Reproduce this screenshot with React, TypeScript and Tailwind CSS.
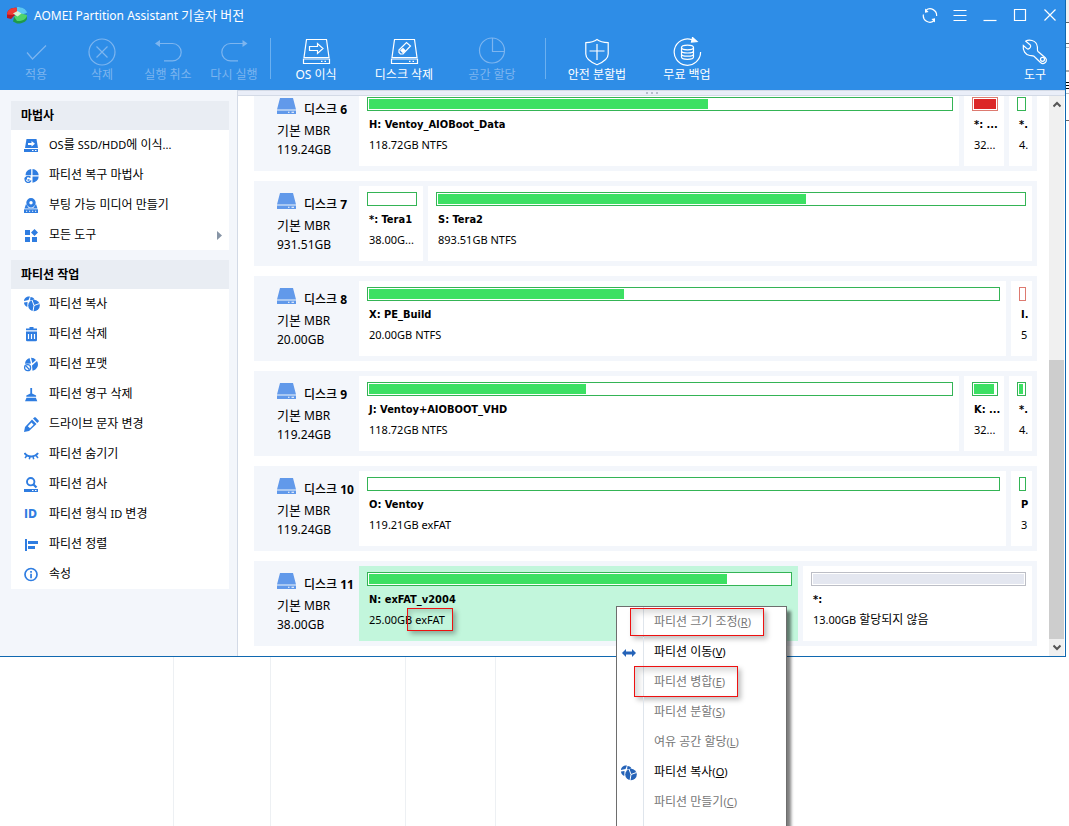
import type { ReactNode } from "react";

const BLUE = "#2f7de1";

/* ---------- toolbar icons ---------- */

function Line({ children }: { children: ReactNode }) {
  return (
    <svg width="30" height="30" viewBox="0 0 30 30" fill="none" stroke="currentColor" strokeWidth="1.2">
      {children}
    </svg>
  );
}

const ApplyIcon = () => (
  <Line>
    <path d="M6 15.500l5.500 6.500L25 8.500" />
  </Line>
);
const DiscardIcon = () => (
  <Line>
    <circle cx="15" cy="15" r="13" />
    <path d="M9.500 9.500l11 11M20.500 9.500l-11 11" />
  </Line>
);
const UndoIcon = () => (
  <Line>
    <path d="M6 6.500h13.500a8.700 8.700 0 0 1 0 17.400H11" />
    <path d="M2 6.500l5-3.500v7z" fill="currentColor" stroke="none" />
  </Line>
);
const RedoIcon = () => (
  <Line>
    <path d="M24 6.500H11.500a8.700 8.700 0 0 0 0 17.400H19" />
    <path d="M28.500 6.500l-5-3.500v7z" fill="currentColor" stroke="none" />
  </Line>
);
const OsIcon = () => (
  <Line>
    <path d="M5.500 2.500h20l2.500 18H3zM2.500 22h26v4.500h-26z" />
    <path d="M20 24.300h1.500M23.500 24.300H25" />
    <path d="M8.500 9.500h8V6.500l5.500 5-5.500 5v-3h-8z" />
  </Line>
);
const WipeIcon = () => (
  <Line>
    <path d="M5.500 2.500h20l2.500 18H3zM2.500 22h26v4.500h-26z" />
    <path d="M20 24.300h1.500M23.500 24.300H25" />
    <path d="M10 13l7.500-7.500 4 3.500-7.500 8h-2.500L10 15.500z" />
    <path d="M12 13.500l2-2 2 2-2 2z" fill="currentColor" />
  </Line>
);
const AllocateIcon = () => (
  <Line>
    <circle cx="15" cy="13.500" r="12.500" />
    <path d="M15.500 1v13.500H28" />
  </Line>
);
const ShieldIcon = () => (
  <Line>
    <path d="M15 2.500c3 2.300 7 3 11.200 3.200V17c0 5-6 8.600-11.200 10.700C9.800 25.600 3.800 22 3.800 17V5.700C8 5.500 12 4.800 15 2.500z" />
    <path d="M15 7v16M7.500 14h15" />
  </Line>
);
const BackupIcon = () => (
  <Line>
    <path d="M20 2.700A13.200 13.200 0 1 0 28.600 15" />
    <path d="M20.500 .5l4.500 4-5.500 .5z" fill="currentColor" />
    <ellipse cx="15.500" cy="10.500" rx="6" ry="2.300" />
    <path d="M9.500 10.500v9.500c0 1.300 2.700 2.300 6 2.300s6-1 6-2.300v-9.500M9.500 13.700c0 1.300 2.700 2.300 6 2.300s6-1 6-2.300M9.500 16.900c0 1.300 2.700 2.300 6 2.300s6-1 6-2.300" />
  </Line>
);
const WrenchIcon = () => (
  <Line>
    <path d="M12 3.500c-3.700-1-6 .3-6.300.7l4.600 3.800c.8 1 .2 2.500-.7 3.200-1 .8-2.300 1-3 .2L3.300 8.500c-.7 5 2 9.500 6.500 10 2 .2 3.200 0 4.200.8l6.500 6.200c2.300 2 5 .8 5.700-1.200.5-1.600 0-2.800-.9-3.600L18 14.500c-1-.9-.4-2.500-.6-4.500-.3-3-2.300-5.700-5.400-6.500z" />
    <circle cx="22.500" cy="22.300" r="2" />
  </Line>
);

/* ---------- sidebar icons ---------- */

function Glyph({ children }: { children: ReactNode }) {
  return (
    <svg width="15" height="15" viewBox="0 0 15 15" fill={BLUE} className="shrink-0">
      {children}
    </svg>
  );
}

const MigrateGlyph = () => (
  <Glyph>
    <path d="M2.500 1h10l1.500 9H1z" />
    <path d="M0 11h14v3H0z" />
    <path d="M4 5h3.500V3L11 5.800 7.500 8.500V7H4zM8 12h1.500v1H8zM11 12h1.500v1H11z" fill="#fff" />
  </Glyph>
);
const RecoverGlyph = () => (
  <Glyph>
    <path d="M7.200 1v6.200H1.500A6.500 6.500 0 0 1 7.200 1zM8.500 1a6.500 6.500 0 0 1 6.200 6.200H8.500zM8.500 8.500h6.200a6.500 6.500 0 0 1-6.200 6.200z" />
    <path d="M6.500 9.500A3 3 0 1 0 7 12.500" fill="none" stroke={BLUE} strokeWidth="1.400" />
    <path d="M0 10l3-1v3zM3.500 11.200h2v1.500h-2z" />
  </Glyph>
);
const MediaGlyph = () => (
  <Glyph>
    <path fillRule="evenodd" d="M7 0a4.700 4.700 0 1 1 0 9.400A4.700 4.700 0 0 1 7 0zm0 3a1.700 1.700 0 1 0 0 3.400A1.700 1.700 0 0 0 7 3z" />
    <path d="M2 6l2.500 3.700h5L12 6l1.500 4.500H.5z" />
    <path d="M0 11.300h14V15H0z" />
    <path d="M2 12.700h1.200v1.100H2zM5 12.700h1.200v1.100H5zM8 12.700h1.200v1.100H8zM11 12.700h1.200v1.100H11z" fill="#fff" />
  </Glyph>
);
const ToolsGlyph = () => (
  <Glyph>
    <path d="M1 2h5v5H1zM1 9h5v5H1zM8 9h5v5H8zM10.500 1L14 4.500 10.500 8 7 4.500z" />
  </Glyph>
);
const CopyGlyph = ({ color = BLUE }: { color?: string }) => (
  <svg width="16" height="16" viewBox="0 0 16 16" fill={color} className="-mr-px shrink-0">
    <path d="M0 5c0-3 3-5 6-4.500L4.500 4zM6.500 1c2 0 3.500 1 4 2.500L6 4.500zM0 6.500L3.500 6l-.2 5C1.500 10 0 8.500 0 6.500z" />
    <circle cx="10" cy="9.500" r="5.800" />
    <path d="M10 9.500L8 4M10 9.500l5.500-2M10 9.500l-1 6" fill="none" stroke="#fff" strokeWidth="1" />
  </svg>
);
const TrashGlyph = () => (
  <Glyph>
    <path d="M5.500 0h4v1.500H13v1.700H2V1.500h3.500z" />
    <path d="M2 4.500h11V13a1.300 1.300 0 0 1-1.300 1.300H3.300A1.300 1.300 0 0 1 2 13z" />
    <path d="M4.500 7v5M7.500 7v5M10.500 7v5" stroke="#fff" strokeWidth="1.200" />
  </Glyph>
);
const FormatGlyph = () => (
  <Glyph>
    <path d="M1 6.800A6.600 6.600 0 0 1 5.500 1L7 6.500zM7 .8A6.600 6.600 0 0 1 12 3L8.300 6.300zM13 4a6.500 6.500 0 0 1-4.500 9.800L8 8.500z" />
    <circle cx="3.600" cy="10.700" r="3" fill="#fff" stroke={BLUE} strokeWidth="1.300" />
    <path d="M2 9l3.300 3.500" stroke={BLUE} strokeWidth="1.200" />
  </Glyph>
);
const BroomGlyph = () => (
  <Glyph>
    <path d="M6.300 1h1.800v5.500l4 2v1.300H2.300V8.500l4-2zM2.500 10.800h9.400l1.400 3.400H1z" />
  </Glyph>
);
const PencilGlyph = () => (
  <Glyph>
    <path fillRule="evenodd" d="M8 2.500L12.500 7 5 14l-5 1 1-5zM7.500 5.500L3.800 9.200 6 11.300 9.600 7.700z" />
    <path d="M9 1.500L10.500.3h1L14.700 3.500v1L13.300 6z" />
  </Glyph>
);
const HideGlyph = () => (
  <Glyph>
    <path d="M.5 6c3 4.500 10.500 4.500 13.500 0" fill="none" stroke={BLUE} strokeWidth="2" />
    <path d="M3 8.500L1 11M12 8.500l2 2.500M6 9.500l-.7 2.700M9 9.500l.7 2.700" stroke={BLUE} strokeWidth="1.500" />
  </Glyph>
);
const CheckGlyph = () => (
  <Glyph>
    <circle cx="6.700" cy="4.700" r="3.700" fill="none" stroke={BLUE} strokeWidth="1.900" />
    <path d="M9 7l3.500 3.500" stroke={BLUE} strokeWidth="2.300" />
    <path d="M0 12h14v3H0z" />
    <path d="M8 13h1.500v1H8zM11 13h1.500v1H11z" fill="#fff" />
  </Glyph>
);
const AlignGlyph = () => (
  <Glyph>
    <path d="M1 2h2v12H1zM4 4h10v3H4zM4 9h7v3H4z" />
  </Glyph>
);
const InfoGlyph = () => (
  <Glyph>
    <circle cx="7" cy="7.500" r="6" fill="none" stroke={BLUE} strokeWidth="1.700" />
    <path d="M6.200 4h1.700v1.700H6.200zM6.200 6.700h1.700v4.500H6.200z" />
  </Glyph>
);
const IdGlyph = () => (
  <span aria-hidden className="w-[15px] shrink-0 font-['DejaVu_Sans_Condensed','DejaVu_Sans',sans-serif] text-[12px] font-bold leading-4 text-[#2f7de1]">
    ID
  </span>
);

/* ---------- pieces ---------- */

type Tool = { label: string; icon: ReactNode; disabled?: boolean };

function ToolButton({ label, icon, disabled, width }: Tool & { width: string }) {
  return (
    <button
      disabled={disabled}
      className={`flex flex-col items-center text-white disabled:text-[#7db5ef] ${width}`}
    >
      <span className="mt-[7px]">{icon}</span>
      <span className="text-[12px] leading-4">{label}</span>
    </button>
  );
}

const historyTools: Tool[] = [
  { label: "적용", icon: <ApplyIcon />, disabled: true },
  { label: "삭제", icon: <DiscardIcon />, disabled: true },
  { label: "실행 취소", icon: <UndoIcon />, disabled: true },
  { label: "다시 실행", icon: <RedoIcon />, disabled: true },
];
const diskTools: Tool[] = [
  { label: "OS 이식", icon: <OsIcon /> },
  { label: "디스크 삭제", icon: <WipeIcon /> },
  { label: "공간 할당", icon: <AllocateIcon />, disabled: true },
];
const extraTools: Tool[] = [
  { label: "안전 분할법", icon: <ShieldIcon /> },
  { label: "무료 백업", icon: <BackupIcon /> },
];

const Small = ({ children }: { children: ReactNode }) => <span className="text-[11px]">{children}</span>;

type SideItem = { key: string; label: ReactNode; icon: ReactNode; more?: boolean };

const wizardItems: SideItem[] = [
  {
    key: "migrate",
    label: (
      <>
        <Small>OS</Small>를 <Small>SSD/HDD</Small>에 이식<Small>...</Small>
      </>
    ),
    icon: <MigrateGlyph />,
  },
  { key: "recover", label: "파티션 복구 마법사", icon: <RecoverGlyph /> },
  { key: "media", label: "부팅 가능 미디어 만들기", icon: <MediaGlyph /> },
  { key: "tools", label: "모든 도구", icon: <ToolsGlyph />, more: true },
];
const partitionItems: SideItem[] = [
  { key: "copy", label: "파티션 복사", icon: <CopyGlyph /> },
  { key: "delete", label: "파티션 삭제", icon: <TrashGlyph /> },
  { key: "format", label: "파티션 포맷", icon: <FormatGlyph /> },
  { key: "wipe", label: "파티션 영구 삭제", icon: <BroomGlyph /> },
  { key: "letter", label: "드라이브 문자 변경", icon: <PencilGlyph /> },
  { key: "hide", label: "파티션 숨기기", icon: <HideGlyph /> },
  { key: "check", label: "파티션 검사", icon: <CheckGlyph /> },
  {
    key: "type",
    label: (
      <>
        파티션 형식 <Small>ID</Small> 변경
      </>
    ),
    icon: <IdGlyph />,
  },
  { key: "align", label: "파티션 정렬", icon: <AlignGlyph /> },
  { key: "props", label: "속성", icon: <InfoGlyph /> },
];

function SideCard({ title, items }: { title: string; items: SideItem[] }) {
  return (
    <section className="bg-white">
      <h2 className="bg-[#e9edf3] px-[10px] text-[12px] font-bold leading-[29px]">{title}</h2>
      <ul>
        {items.map((item) => (
          <li key={item.key}>
            <button className="flex h-[30px] w-full items-center gap-[10px] pl-[13px] pr-[7px] text-left text-[12px] leading-4">
              {item.icon}
              <span className="flex-1 whitespace-nowrap">{item.label}</span>
              {item.more && (
                <svg width="5" height="9" viewBox="0 0 5 9" fill="#8795a6">
                  <path d="M0 0l5 4.500L0 9z" />
                </svg>
              )}
            </button>
          </li>
        ))}
      </ul>
    </section>
  );
}

type Part = {
  name: string;
  size: ReactNode;
  used: number;
  width?: string;
  tone?: "green" | "red" | "rose" | "gray";
  selected?: boolean;
};
type Disk = { id: number; size: string; parts: Part[] };

const disks: Disk[] = [
  {
    id: 6,
    size: "119.24GB",
    parts: [
      { name: "H: Ventoy_AIOBoot_Data", size: "118.72GB NTFS", used: 58.2 },
      { name: "*: ...", size: "32...", used: 100, width: "w-10", tone: "red" },
      { name: "*.", size: "4.", used: 0, width: "w-[23px]" },
    ],
  },
  {
    id: 7,
    size: "931.51GB",
    parts: [
      { name: "*: Tera1", size: "38.00G...", used: 0, width: "w-16" },
      { name: "S: Tera2", size: "893.51GB NTFS", used: 62.8 },
    ],
  },
  {
    id: 8,
    size: "20.00GB",
    parts: [
      { name: "X: PE_Build", size: "20.00GB NTFS", used: 40.5 },
      { name: "I.", size: "5", used: 0, width: "w-[21px]", tone: "rose" },
    ],
  },
  {
    id: 9,
    size: "119.24GB",
    parts: [
      { name: "J: Ventoy+AIOBOOT_VHD", size: "118.72GB NTFS", used: 37.3 },
      { name: "K: ...", size: "32...", used: 91, width: "w-10" },
      { name: "*.", size: "4.", used: 80, width: "w-[23px]" },
    ],
  },
  {
    id: 10,
    size: "119.24GB",
    parts: [
      { name: "O: Ventoy", size: "119.21GB exFAT", used: 0 },
      { name: "P", size: "3", used: 0, width: "w-[21px]" },
    ],
  },
  {
    id: 11,
    size: "38.00GB",
    parts: [
      {
        name: "N: exFAT_v2004",
        size: (
          <>
            25.00GB{" "}
            <span className="relative">
              exFAT
              <span className="absolute -inset-x-2 -inset-y-1 border border-[#ee1111] shadow-[3px_3px_5px_rgba(0,0,0,0.3),inset_3px_3px_5px_rgba(0,0,0,0.15)]" />
            </span>
          </>
        ),
        used: 85,
        selected: true,
      },
      {
        name: "*:",
        size: (
          <>
            13.00GB <span className="text-[12px]">할당되지 않음</span>
          </>
        ),
        used: 100,
        width: "w-[229px]",
        tone: "gray",
      },
    ],
  },
];

const tones = {
  green: { border: "border-[#34b455]", fill: "bg-[#3ce063]" },
  red: { border: "border-[#dd7a70]", fill: "bg-[#dc2626]" },
  rose: { border: "border-[#dd7a70]", fill: "bg-[#dc2626]" },
  gray: { border: "border-[#bcbec6]", fill: "bg-[#e4e7f0]" },
};

function PartitionPanel({ part }: { part: Part }) {
  const tone = tones[part.tone ?? "green"];
  return (
    <div
      className={`overflow-hidden pl-2 pr-[6px] pt-[6px] ${part.width ? `${part.width} shrink-0` : "min-w-0 flex-1"} ${
        part.selected ? "bg-[#c2f6dc]" : "bg-white"
      }`}
    >
      <div className={`h-[14px] border bg-white p-px ${tone.border}`}>
        <div className={`h-full ${tone.fill}`} style={{ width: `${part.used}%` }} />
      </div>
      <div className="mt-[6px] whitespace-nowrap pl-0.5 text-[11px] leading-4">
        <div className="font-['DejaVu_Sans_Condensed','Noto_Sans',sans-serif] font-bold">{part.name}</div>
        <div className="mt-1">{part.size}</div>
      </div>
    </div>
  );
}

function DiskRow({ disk }: { disk: Disk }) {
  return (
    <div className="flex h-[85px] gap-[5px] bg-[#f3f6fb] py-[5px] pr-[5px]">
      <div className="w-[100px] shrink-0 pl-[23px] pt-[6px] text-[12px] leading-[19px]">
        <div className="flex h-6 items-center gap-2">
          <svg width="19" height="17" viewBox="0 0 19 17" fill="#6199ea" className="mb-[6px] shrink-0">
            <path d="M3 0h13l3 11.500H0zM0 12.500h19V16H0z" />
            <path d="M11 13.700h1.500v1H11zM14.500 13.700H17v1h-2.500z" fill="#fff" />
          </svg>
          <span className="whitespace-nowrap font-medium">
            디스크 <b>{disk.id}</b>
          </span>
        </div>
        <div>
          <span className="text-[13px]">기본</span> MBR
        </div>
        <div>{disk.size}</div>
      </div>
      {disk.parts.map((part) => (
        <PartitionPanel key={part.name} part={part} />
      ))}
    </div>
  );
}

type MenuEntry = { label: string; hotkey: string; icon?: ReactNode; enabled?: boolean; mark?: string };

const menuEntries: MenuEntry[] = [
  { label: "파티션 크기 조정", hotkey: "R", mark: "left-[13px] right-[22px] top-px h-[28px]" },
  {
    label: "파티션 이동",
    hotkey: "V",
    enabled: true,
    icon: (
      <svg width="14" height="8" viewBox="0 0 14 8" fill="#2563b8">
        <path d="M0 4l4-4v2.500h6V0l4 4-4 4V5.500H4V8z" />
      </svg>
    ),
  },
  { label: "파티션 병합", hotkey: "E", mark: "left-[17px] right-[48px] -top-px h-[31px]" },
  { label: "파티션 분할", hotkey: "S" },
  { label: "여유 공간 할당", hotkey: "L" },
  { label: "파티션 복사", hotkey: "O", enabled: true, icon: <CopyGlyph color="#2563b8" /> },
  { label: "파티션 만들기", hotkey: "C" },
];

function ContextMenu() {
  return (
    <div className="absolute left-[616px] top-[606px] w-[171px] border border-[#6e6e6e] bg-white shadow-[4px_5px_3px_rgba(0,0,0,0.5)]">
      <ul>
        {menuEntries.map((entry) => (
          <li key={entry.hotkey} className="relative">
            <button
              disabled={!entry.enabled}
              className="flex h-[30px] w-full text-left text-[12px] leading-[30px] text-black disabled:text-[#777777]"
            >
              <span className="flex w-[27px] items-center justify-center border-r border-[#dfe5ec] pr-[3px] pt-px">{entry.icon}</span>
              <span className="whitespace-nowrap pl-[10px]">
                {entry.label}
                <Small>
                  (<u>{entry.hotkey}</u>)
                </Small>
              </span>
            </button>
            {entry.mark && (
              <span
                className={`absolute border border-[#ee1111] shadow-[3px_3px_5px_rgba(0,0,0,0.25),inset_4px_4px_6px_rgba(0,0,0,0.15)] ${entry.mark}`}
              />
            )}
          </li>
        ))}
      </ul>
      <div className="h-[30px] w-[27px] border-r border-[#dfe5ec]" />
    </div>
  );
}

function ScrollBar() {
  return (
    <div aria-hidden className="mr-px flex w-[15px] shrink-0 flex-col bg-[#f0f0f0]">
      <div className="flex h-[17px] items-center justify-center">
        <svg width="8" height="7" viewBox="0 0 8 7" fill="none" stroke="#555" strokeWidth="2">
          <path d="M.5 5.500L4 2l3.500 3.500" />
        </svg>
      </div>
      <div className="flex flex-1 flex-col justify-end">
        <div className="h-[53%] bg-[#cdcdcd]" />
      </div>
      <div className="flex h-[17px] items-center justify-center">
        <svg width="8" height="7" viewBox="0 0 8 7" fill="none" stroke="#555" strokeWidth="2">
          <path d="M.5 1.500L4 5l3.500-3.500" />
        </svg>
      </div>
    </div>
  );
}

function Logo() {
  return (
    <svg width="20" height="17" viewBox="0 0 20 17">
      <path d="M10 1C5 0 0 3 0 7.500v3.500l4 1 3-3 3-2z" fill="#b81820" />
      <path d="M10 1C5 0 0 3 0 7.500L6 8l4-3z" fill="#ee3a33" />
      <path d="M10 0c6 0 10 2.500 10 7v4l-7-2-3-3z" fill="#1f7fd0" />
      <path d="M10 0c5 0 9.500 2 10 6l-7 2-3-3z" fill="#5cc6f2" />
      <path d="M7 10l6-3 7 1.500V12c-1 3-6 5-10 4.500l-4-2z" fill="#1f9a4a" />
      <path d="M7 9.500l5-3.500 8 2c0 3.500-4 6.500-10 6z" fill="#4fd36b" />
      <path d="M6 6.500l4.500-2.500 4 2.500-4 3z" fill="#d9f3d0" />
    </svg>
  );
}

function WindowButton({ label, children }: { label: string; children: ReactNode }) {
  return (
    <button aria-label={label} className="flex h-[30px] w-[30px] items-center justify-center">
      <svg width="16" height="16" viewBox="0 0 16 16" fill="none" stroke="#fff" strokeWidth="1.200">
        {children}
      </svg>
    </button>
  );
}

export default function App() {
  return (
    <div className="relative flex min-h-screen flex-col overflow-hidden bg-white font-['Noto_Sans','Noto_Sans_CJK_KR',sans-serif] text-black">
      <div className="flex">
        <div className="flex min-w-0 flex-1 flex-col border-b border-r border-[#1068b0]">
          <header className="h-[90px] bg-[#2e8de7] text-white">
            <div className="flex h-[30px] items-center pl-[7px]">
              <Logo />
              <h1 className="flex-1 whitespace-nowrap pl-[7px] text-[12px] leading-5">
                AOMEI Partition Assistant <span className="text-[13px]">기술자 버전</span>
              </h1>
              <WindowButton label="새로 고침">
                <path d="M4 3.200A6.600 6.600 0 0 1 14.600 9M12 13.800A6.600 6.600 0 0 1 1.400 7.500" />
                <path d="M3 1.500v4.200l3.600-.8zM13 15.500v-4.200l-3.600.8z" fill="#fff" stroke="none" />
              </WindowButton>
              <WindowButton label="메뉴">
                <path d="M1.500 3.500h13M1.500 8.500h13M1.500 13.500h13" />
              </WindowButton>
              <WindowButton label="최소화">
                <path d="M1.500 13.500h13" />
              </WindowButton>
              <WindowButton label="최대화">
                <path d="M2.500 2.500h11v11h-11z" />
              </WindowButton>
              <WindowButton label="닫기">
                <path d="M2.500 2.500l11 11M13.500 2.500l-11 11" />
              </WindowButton>
            </div>
            <div className="flex pl-[3px]">
              {historyTools.map((t) => (
                <ToolButton key={t.label} {...t} width="w-[66px]" />
              ))}
              <span className="ml-[3px] mr-px mt-2 h-[41px] w-px bg-[#6bb0f0]" />
              {diskTools.map((t) => (
                <ToolButton key={t.label} {...t} width="w-[88px]" />
              ))}
              <span className="ml-[9px] mr-[6px] mt-2 h-[41px] w-px bg-[#6bb0f0]" />
              {extraTools.map((t) => (
                <ToolButton key={t.label} {...t} width="w-[90px]" />
              ))}
              <span className="flex-1" />
              <ToolButton label="도구" icon={<WrenchIcon />} width="w-[60px]" />
            </div>
          </header>

          <div className="flex">
            <nav className="flex w-[238px] shrink-0 flex-col gap-[10px] border-r border-[#d3dae6] bg-[#f3f6fb] pl-[11px] pr-2 pt-[11px]">
              <SideCard title="마법사" items={wizardItems} />
              <SideCard title="파티션 작업" items={partitionItems} />
            </nav>

            <div className="flex min-w-0 flex-1 flex-col">
              <div className="flex h-[6px] items-center justify-center gap-[3px] border-y border-[#d3dae6] bg-[#eaeef8]">
                <span className="h-0.5 w-0.5 bg-[#b4bccb]" />
                <span className="h-0.5 w-0.5 bg-[#b4bccb]" />
                <span className="h-0.5 w-0.5 bg-[#b4bccb]" />
              </div>
              <div className="flex">
                <main className="min-w-0 flex-1 overflow-hidden pb-[10px] pl-4 pr-3">
                  <div className="-mt-[10px] flex flex-col gap-[10px]">
                    {disks.map((disk) => (
                      <DiskRow key={disk.id} disk={disk} />
                    ))}
                  </div>
                </main>
                <ScrollBar />
              </div>
            </div>
          </div>
        </div>

        <div aria-hidden className="flex w-[3px] shrink-0 flex-col bg-white">
          <span className="h-[22px] bg-[#f0f0f0]" />
          <span className="h-px bg-[#666]" />
          <span className="mt-5 h-px bg-[#666]" />
          <span className="mt-[3px] h-px bg-[#bbb]" />
          <span className="mt-[22px] h-0.5 bg-[#aaa]" />
          <span className="mt-[10px] h-px bg-black" />
          <span className="mt-[2px] h-px bg-black" />
          <span className="mt-[2px] h-px bg-black" />
          <span className="mt-1 h-px bg-[#bbb]" />
          <span className="mt-[26px] h-px bg-[#666]" />
        </div>
      </div>

      <div aria-hidden className="flex flex-1">
        <div className="w-[174px] border-r border-[#edf0f3]" />
        <div className="w-[97px] border-r border-[#edf0f3]" />
        <div className="w-[135px] border-r border-[#edf0f3]" />
        <div className="w-[90px] border-r border-[#edf0f3]" />
      </div>

      <ContextMenu />
    </div>
  );
}
